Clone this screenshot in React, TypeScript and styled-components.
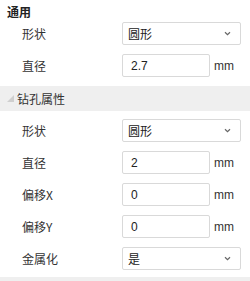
import React from "react";
import styled, { createGlobalStyle } from "styled-components";

const GlobalStyle = createGlobalStyle`
  html, body {
    margin: 0;
    padding: 0;
    background: #fff;
  }
  body {
    font-family: "Noto Sans CJK SC", "Liberation Sans", sans-serif;
    font-size: 12px;
    color: #333;
  }
`;

const Panel = styled.div`
  width: 250px;
  height: 281px;
  display: flex;
  flex-direction: column;
  background: #fff;
  overflow: hidden;
`;

const GroupTitle = styled.div`
  height: 22px;
  display: flex;
  align-items: center;
  padding-left: 7px;
  font-weight: bold;
  color: #222;
`;

const GroupBar = styled.div`
  height: 25px;
  margin-top: 9px;
  display: flex;
  align-items: center;
  gap: 2px;
  padding-left: 6px;
  background: #efefef;
  color: #333;
`;

const Rows = styled.div<{ $top: number }>`
  display: flex;
  flex-direction: column;
  gap: 9px;
  padding-top: ${({ $top }) => $top}px;
`;

const Row = styled.div`
  height: 23px;
  display: flex;
  align-items: center;
`;

const Label = styled.div`
  width: 100px;
  padding-left: 22px;
  color: #333;
`;

const SelectBox = styled.div`
  width: 119px;
  height: 23px;
  box-sizing: border-box;
  border: 1px solid #d9d9d9;
  border-radius: 2px;
  display: flex;
  align-items: center;
  justify-content: space-between;
  padding: 0 9px 0 5px;
  color: #222;
`;

const InputBox = styled.div`
  width: 88px;
  height: 23px;
  box-sizing: border-box;
  border: 1px solid #d9d9d9;
  border-radius: 2px;
  display: flex;
  align-items: center;
  padding-left: 8px;
  color: #222;
  font-family: "Liberation Sans", "Noto Sans CJK SC", sans-serif;
`;

const Unit = styled.span`
  margin-left: 4px;
  color: #333;
  font-family: "Liberation Sans", sans-serif;
  font-size: 12px;
`;

const Footer = styled.div`
  margin-top: 7px;
  flex: 1;
  background: #efefef;
`;

const Chevron = () => (
  <svg width="7" height="5" viewBox="0 0 7 5">
    <path d="M1 1.2 L3.5 3.6 L6 1.2" fill="none" stroke="#666" strokeWidth="1.2" />
  </svg>
);

const Triangle = () => (
  <svg width="9" height="9" viewBox="0 0 9 9">
    <path d="M8 1 L8 8 L1 8 Z" fill="#cfcfcf" />
  </svg>
);

type Field =
  | { label: string; kind: "select"; value: string }
  | { label: string; kind: "input"; value: string };

const FieldRow = ({ field }: { field: Field }) => (
  <Row>
    <Label>{field.label}</Label>
    {field.kind === "select" ? (
      <SelectBox>
        <span>{field.value}</span>
        <Chevron />
      </SelectBox>
    ) : (
      <>
        <InputBox>{field.value}</InputBox>
        <Unit>mm</Unit>
      </>
    )}
  </Row>
);

const general: Field[] = [
  { label: "形状", kind: "select", value: "圆形" },
  { label: "直径", kind: "input", value: "2.7" },
];

const drill: Field[] = [
  { label: "形状", kind: "select", value: "圆形" },
  { label: "直径", kind: "input", value: "2" },
  { label: "偏移X", kind: "input", value: "0" },
  { label: "偏移Y", kind: "input", value: "0" },
  { label: "金属化", kind: "select", value: "是" },
];

const App: React.FC = () => {
  return (
    <>
      <GlobalStyle />
      <Panel>
        <GroupTitle>通用</GroupTitle>
        <Rows $top={0}>
          {general.map((f, i) => (
            <FieldRow key={i} field={f} />
          ))}
        </Rows>
        <GroupBar>
          <Triangle />
          <span>钻孔属性</span>
        </GroupBar>
        <Rows $top={8}>
          {drill.map((f, i) => (
            <FieldRow key={i} field={f} />
          ))}
        </Rows>
        <Footer />
      </Panel>
    </>
  );
};

export default App;
